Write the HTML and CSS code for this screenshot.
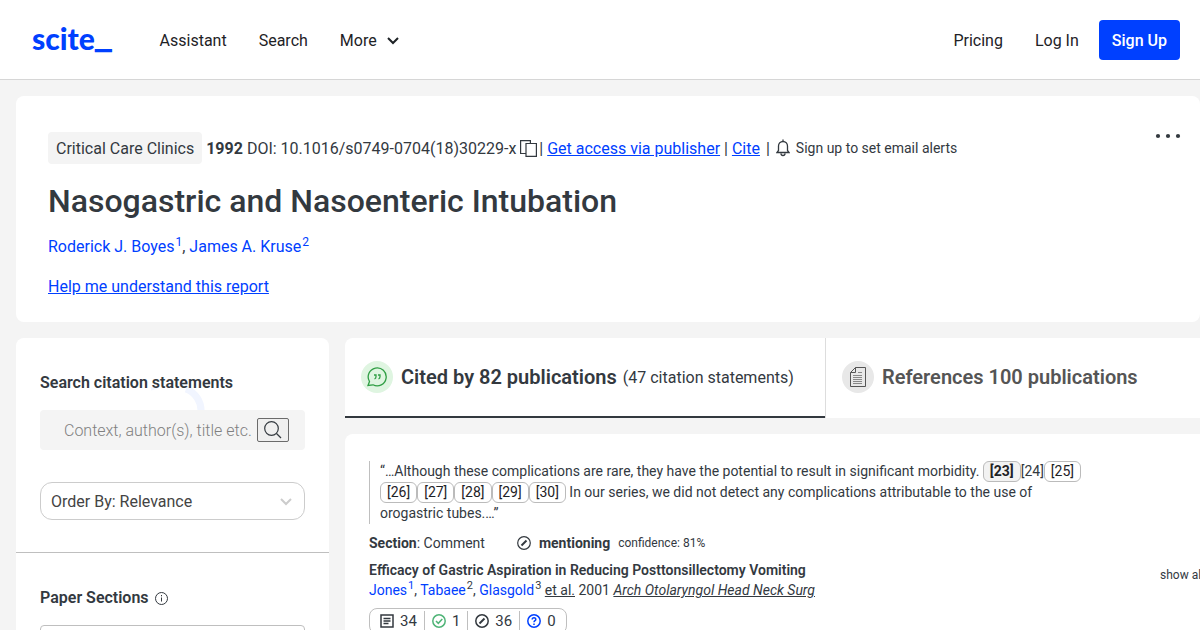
FILE: index.html
```html
<!DOCTYPE html>
<html lang="en">

<head>
    <meta charset="UTF-8" />
    <meta name="viewport" content="width=device-width, initial-scale=1.0" />
    <title>Nasogastric and Nasoenteric Intubation</title>
    <link rel="stylesheet" href="styles.css">
</head>

<body>
    <header class="navbar">
        <a class="logo" href="#">scite<span class="logo-bar">_</span></a>
        <nav class="nav-links">
            <a href="#">Assistant</a>
            <a href="#">Search</a>
            <button type="button" class="more">More
                <svg width="12" height="8" viewBox="0 0 12 8" fill="none" stroke="currentColor" stroke-width="2"><path d="M1 1l5 5 5-5" /></svg>
            </button>
        </nav>
        <nav class="nav-account">
            <a href="#">Pricing</a>
            <a href="#">Log In</a>
            <a class="sign-up" href="#">Sign Up</a>
        </nav>
    </header>

    <div class="page">
        <section class="paper">
            <div class="paper-meta">
                <span class="journal">Critical Care Clinics</span>
                <span class="doi"><b>1992</b> DOI: 10.1016/s0749-0704(18)30229-x</span>
                <button type="button" class="copy" aria-label="Copy DOI">
                    <svg width="17" height="17" viewBox="0 0 17 17" fill="none" stroke="currentColor" stroke-width="1.2"><path d="M6 13.500H.6V.6h9.800v2.900M6 3.500h10.400v12.900H6z" /></svg>
                </button>
                <span class="access">| <a href="#">Get access via publisher</a> | <a href="#">Cite</a></span>
                <span class="divider">|</span>
                <button type="button" class="alerts">
                    <svg width="14" height="18" viewBox="0 0 14 18" fill="none" stroke="currentColor" stroke-width="1.3"><path d="M7 .5v2M1 13.5h12l-1.500-2V7A4.500 4.500 0 0 0 2.500 7v4.500zM5 14.500a2 2 0 0 0 4 0" /></svg>
                    Sign up to set email alerts
                </button>
            </div>
            <h1>Nasogastric and Nasoenteric Intubation</h1>
            <p class="authors"><a href="#">Roderick J. Boyes<sup>1</sup></a>, <a href="#">James A. Kruse<sup>2</sup></a></p>
            <a class="help" href="#">Help me understand this report</a>
            <button type="button" class="menu" aria-label="Paper actions">
                <svg width="26" height="6" viewBox="0 0 26 6" fill="currentColor"><circle cx="3" cy="3" r="2.100" /><circle cx="13" cy="3" r="2.100" /><circle cx="23" cy="3" r="2.100" /></svg>
            </button>
        </section>

        <div class="columns">
            <aside class="sidebar">
                <section class="filter">
                    <svg class="ring" width="56" height="28" viewBox="0 0 56 28" fill="none" stroke="#f1f5ff" stroke-width="7"><path d="M1 5l6-2" stroke-width="3" /><path d="M36 5a23 23 0 0 1 15 23" /></svg>
                    <label class="filter-title" for="query">Search citation statements</label>
                    <form class="search-box">
                        <input type="text" id="query" placeholder="Context, author(s), title etc.">
                        <button type="submit" aria-label="Search">
                            <svg width="18" height="18" viewBox="0 0 18 18" fill="none" stroke="currentColor" stroke-width="1.200"><circle cx="7.500" cy="7.500" r="6.800" /><path d="M12.500 12.500l4.500 4.500" /></svg>
                        </button>
                    </form>
                    <div class="order">
                        <select aria-label="Order citations">
                            <option>Order By: Relevance</option>
                        </select>
                        <svg width="12" height="8" viewBox="0 0 12 8" fill="none" stroke="#ccc" stroke-width="2"><path d="M1 1l5 5 5-5" /></svg>
                    </div>
                </section>
                <section class="filter">
                    <h2 class="filter-title">Paper Sections
                        <svg width="13" height="13" viewBox="0 0 13 13" fill="none" stroke="currentColor"><circle cx="6.500" cy="6.500" r="6" /><path d="M6.500 3v1.300M6.500 5.500v4" /></svg>
                    </h2>
                    <div class="section-list"></div>
                </section>
            </aside>

            <main class="results">
                <div class="tabs">
                    <button type="button" class="tab active">
                        <span class="tab-icon">
                            <svg width="20" height="20" viewBox="0 0 20 20" fill="none" stroke="currentColor" stroke-width="1.300"><path d="M1 18.500l1.500-4A9 9 0 1 1 6 17.800z" /><path d="M7 8h2v1.800q0 1.700-1.500 2.200M11 8h2v1.800q0 1.700-1.500 2.200" /></svg>
                        </span>
                        <strong>Cited by 82 publications</strong>
                        <span class="statements">(47 citation statements)</span>
                    </button>
                    <button type="button" class="tab">
                        <span class="tab-icon">
                            <svg width="16" height="20" viewBox="0 0 16 20" fill="none" stroke="currentColor"><path d="M5.500.5h10v19H.5v-14zM5.500.5v5h-5" /><path d="M8 5.500h4M3 8.500h9M3 10.500h9M3 12.500h9M3 14.500h9M3 16.500h9" stroke="#888" /></svg>
                        </span>
                        <strong>References 100 publications</strong>
                    </button>
                </div>

                <article class="citation">
                    <blockquote>“…Although these complications are rare, they have the potential to result in significant morbidity. <button type="button" class="ref current">[23]</button>[24]<button type="button" class="ref">[25]</button> <button type="button" class="ref">[26]</button><button type="button" class="ref">[27]</button><button type="button" class="ref">[28]</button><button type="button" class="ref">[29]</button><button type="button" class="ref">[30]</button> In our series, we did not detect any complications attributable to the use of orogastric tubes.…”</blockquote>
                    <div class="classification">
                        <span><b>Section</b>: Comment</span>
                        <span class="type">
                            <svg width="14" height="14" viewBox="0 0 14 14" fill="none" stroke="currentColor" stroke-width="1.200"><circle cx="7" cy="7" r="6.300" /><path d="M4.500 9.500l5-5" stroke-width="2" /></svg>
                            <b>mentioning</b>
                            <small>confidence: 81%</small>
                        </span>
                    </div>
                    <div class="source">
                        <div>
                            <h3>Efficacy of Gastric Aspiration in Reducing Posttonsillectomy Vomiting</h3>
                            <p><a href="#">Jones<sup>1</sup></a>, <a href="#">Tabaee</a><sup>2</sup>, <a href="#">Glasgold</a><sup>3</sup> <u>et al.</u> 2001 <u><i>Arch Otolaryngol Head Neck Surg</i></u></p>
                        </div>
                        <button type="button" class="show-all">show all</button>
                    </div>
                    <div class="tally">
                        <span><svg width="14" height="14" viewBox="0 0 14 14" fill="none" stroke="currentColor" stroke-width="1.500"><path d="M1 1h12v12H1zM3.500 4.500h7M3.500 7h7M3.500 9.500h5" /></svg>34</span>
                        <span><svg width="14" height="14" viewBox="0 0 14 14" fill="none" stroke="#4fb477" stroke-width="1.500"><circle cx="7" cy="7" r="6.200" /><path d="M4 7l2.300 2.300L10.300 5" /></svg>1</span>
                        <span><svg width="14" height="14" viewBox="0 0 14 14" fill="none" stroke="currentColor" stroke-width="1.500"><circle cx="7" cy="7" r="6.200" /><path d="M4.500 9.500l5-5" stroke-width="2" /></svg>36</span>
                        <span><svg width="14" height="14" viewBox="0 0 14 14" fill="none" stroke="#0040ff" stroke-width="1.500"><circle cx="7" cy="7" r="6.200" /><path d="M5.200 5.500C5.200 3 8.800 3.100 8.800 5.400 8.800 6.700 7 6.700 7 8.300M7 9.500v1.500" /></svg>0</span>
                    </div>
                </article>
            </main>
        </div>
    </div>
</body>

</html>
```

FILE: styles.css
```css
:root {
    --blue: #0040ff;
    --text: #33393f;
    --grey: #f4f4f4;
    --border: #bfbfbf;
}

* {
    box-sizing: border-box;
    margin: 0;
    padding: 0;
}

body {
    font-family: Roboto, sans-serif;
    font-size: 16px;
    line-height: 24px;
    color: var(--text);
    background-color: var(--grey);
    overflow-x: hidden;
}

a {
    color: var(--blue);
}

button {
    font: inherit;
    color: inherit;
    background: none;
    border: none;
    cursor: pointer;
}

svg {
    flex: none;
}

sup {
    font-size: 12px;
    line-height: 0;
    margin-left: 1px;
}

.navbar {
    display: flex;
    align-items: center;
    height: 80px;
    padding: 0 20px 0 32px;
    background-color: #fff;
    border-bottom: 1px solid #d6d6d6;
}

.navbar a {
    color: #1e2226;
    text-decoration: none;
}

.navbar .logo {
    padding-bottom: 4px;
    font-family: Lato, sans-serif;
    font-size: 30px;
    font-weight: 900;
    line-height: 32px;
    color: var(--blue);
}

.logo-bar {
    font-family: "Liberation Sans", sans-serif;
    line-height: 0;
    vertical-align: 3px;
    text-shadow: 0 1px 0 var(--blue), 0 2px 0 var(--blue);
}

.nav-links {
    display: flex;
    gap: 32px;
    margin-left: 48px;
    padding-top: 2px;
}

.more {
    display: flex;
    align-items: center;
    gap: 10px;
    color: #1e2226;
}

.nav-account {
    display: flex;
    align-items: center;
    gap: 32px;
    margin-left: auto;
}

.nav-account a {
    padding-top: 2px;
}

.navbar .sign-up {
    margin-left: -12px;
    padding: 9px 13px 7px;
    font-weight: 500;
    color: #fff;
    background-color: var(--blue);
    border-radius: 4px;
}

.page {
    padding: 16px 0 16px 16px;
}

.paper {
    position: relative;
    padding: 36px 32px 23px;
    background-color: #fff;
    border-radius: 8px;
}

.paper-meta {
    display: flex;
    align-items: center;
    gap: 2px;
    white-space: nowrap;
}

.journal {
    margin-right: 2px;
    padding: 5px 8px 3px;
    background-color: var(--grey);
    border-radius: 4px;
}

.doi,
.access,
.divider {
    padding-top: 2px;
}

.copy {
    display: flex;
    margin-left: 2px;
}

.divider {
    margin: 0 4px;
}

.alerts {
    display: flex;
    align-items: center;
    gap: 6px;
    font-size: 14px;
}

h1 {
    margin: 17px 0 14px;
    font-size: 32px;
    font-weight: 500;
    line-height: 40px;
}

.authors {
    margin-bottom: 16px;
}

.authors a,
.source a {
    text-decoration: none;
}

.help {
    display: block;
    width: fit-content;
}

.menu {
    display: flex;
    position: absolute;
    top: 37px;
    right: 19px;
}

.columns {
    display: flex;
    gap: 16px;
    margin-top: 16px;
}

.sidebar {
    flex: none;
    width: 313px;
    background-color: #fff;
    border-radius: 8px;
}

.filter {
    position: relative;
    padding: 33px 24px 32px;
}

.filter + .filter {
    border-top: 1px solid var(--border);
}

.filter-title {
    display: flex;
    align-items: center;
    position: relative;
    gap: 6px;
    margin-bottom: 15px;
    font-size: 16px;
    font-weight: 600;
}

/* loading ring, mostly hidden behind the search box */
.ring {
    position: absolute;
    top: 46px;
    left: 134px;
}

.search-box {
    position: relative;
    display: flex;
    align-items: center;
    height: 40px;
    padding: 0 16px 0 24px;
    background-color: var(--grey);
    border-radius: 4px;
}

.search-box input {
    flex: 1;
    min-width: 0;
    padding-top: 2px;
    font: inherit;
    font-weight: 300;
    background: none;
    border: none;
    outline: none;
}

.search-box input::placeholder {
    color: #808080;
}

.search-box button {
    display: flex;
    align-items: center;
    justify-content: center;
    width: 32px;
    height: 24px;
    background-color: #efefef;
    border: 1px solid #6b6b6b;
    border-radius: 2px;
}

.order {
    position: relative;
    margin-top: 32px;
}

.order select {
    display: block;
    width: 100%;
    height: 38px;
    padding: 2px 10px 0;
    font: inherit;
    color: #444;
    background-color: #fff;
    border: 1px solid #ccc;
    border-radius: 12px;
    appearance: none;
}

.order svg {
    position: absolute;
    top: 16px;
    right: 13px;
}

.section-list {
    height: 120px;
    border: 1px solid var(--border);
    border-radius: 4px;
}

.results {
    flex: 1;
    min-width: 960px;
}

.tabs {
    display: grid;
    grid-template-columns: 1fr 1fr;
    height: 80px;
    margin-bottom: 16px;
    background-color: #fff;
    border-radius: 8px 8px 0 0;
}

.tab {
    display: flex;
    align-items: center;
    padding: 0 16px 2px;
    color: #555;
    border-left: 1px solid #ddd;
    white-space: nowrap;
}

.tab.active {
    padding-bottom: 0;
    color: var(--text);
    border-left: none;
    border-bottom: 2px solid var(--text);
}

.tab strong {
    font-size: 20px;
    font-weight: 600;
}

.tab-icon {
    display: flex;
    align-items: center;
    justify-content: center;
    width: 32px;
    height: 32px;
    margin-right: 8px;
    background-color: #e8e8e8;
    border-radius: 50%;
}

.active .tab-icon {
    color: #2f9e44;
    background-color: #dff5e1;
}

.statements {
    margin-left: 6px;
    padding-top: 2px;
}

.citation {
    padding: 27px 24px 24px;
    font-size: 14px;
    line-height: 20px;
    background-color: #fff;
    border-radius: 8px;
}

blockquote {
    max-width: 720px;
    padding-left: 10px;
    line-height: 21px;
    border-left: 1px solid var(--border);
    overflow: hidden;
}

.ref {
    padding: 0 6px;
    line-height: 19px;
    color: #1e2226;
    border: 1px solid #bbb;
    border-radius: 6px;
}

.ref.current {
    font-weight: 700;
    background-color: #f2f2f2;
}

.classification {
    display: flex;
    gap: 32px;
    margin: 9px 0 7px;
}

.type {
    display: flex;
    align-items: center;
    gap: 8px;
}

.type small {
    font-size: 12px;
}

.source {
    display: flex;
    width: 835px;
    justify-content: space-between;
    align-items: flex-start;
}

.source h3 {
    font-size: 14px;
    font-weight: 600;
}

.source sup {
    font-size: 11px;
}

.show-all {
    margin-top: 5px;
    font-size: 12px;
}

.tally {
    display: flex;
    width: fit-content;
    margin-top: 8px;
    padding: 2px 3px;
    font-size: 15px;
    border: 1px solid var(--border);
    border-radius: 8px;
}

.tally span {
    display: flex;
    align-items: center;
    gap: 6px;
    padding: 0 7px;
}

.tally span + span {
    border-left: 1px solid var(--border);
}
```
